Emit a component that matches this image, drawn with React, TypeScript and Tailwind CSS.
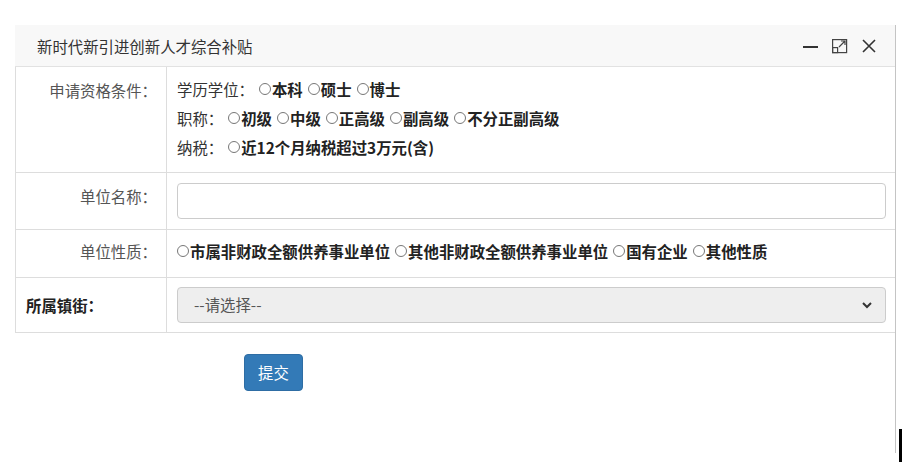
import React from 'react'

const FONT = '"Noto Sans CJK SC", "Noto Sans", "Liberation Sans", sans-serif'

function Radio({ label }: { label: string }) {
  return (
    <span className="inline-flex items-center ml-[5px]">
      <span className="w-[12px] h-[12px] rounded-full border border-[#777] mr-[1px] bg-white" />
      <span className="font-bold text-[#222]">{label}</span>
    </span>
  )
}

function Row({
  label,
  bold,
  labelClass,
  children,
}: {
  label: string
  bold?: boolean
  labelClass?: string
  children: React.ReactNode
}) {
  return (
    <div className="flex border-b border-[#ddd]">
      <div
        className={`w-[151px] shrink-0 border-r border-[#ddd] leading-[20px] ${
          bold ? 'font-bold text-[#222] text-left pl-[10px]' : 'text-right pr-[9px] text-[#555]'
        } ${labelClass ?? ''}`}
      >
        {label}
      </div>
      <div className="flex-1 pl-[10px] pr-[9px]">{children}</div>
    </div>
  )
}

export default function App() {
  return (
    <div className="relative w-[907px] h-[464px] bg-white text-[15.4px]" style={{ fontFamily: FONT }}>
      <div className="pt-[25px] pl-[15px] w-[896px]">
        <div className="h-[428px] border-r border-[#c4c4c4]">
          {/* header */}
          <div className="h-[42px] bg-[#f8f8f8] border-b border-[#e2e2e2] flex items-center pl-[22px] pr-[18px]">
            <span className="text-[#333] leading-[20px] flex-1">新时代新引进创新人才综合补贴</span>
            <div className="flex items-center gap-[13px] text-[#333]">
              <svg width="16" height="16" viewBox="0 0 16 16">
                <line x1="0" y1="9" x2="15" y2="9" stroke="#333" strokeWidth="2" />
              </svg>
              <svg width="16" height="16" viewBox="0 0 16 16" fill="none" stroke="#444" strokeWidth="1.2">
                <rect x="0.6" y="1.6" width="14" height="13" />
                <rect x="0.6" y="9.6" width="5" height="5" />
                <path d="M7 9 L13 3 M9 3 H13 V7" />
              </svg>
              <svg width="16" height="16" viewBox="0 0 16 16" fill="none" stroke="#333" strokeWidth="1.6">
                <path d="M2 2 L14 14 M14 2 L2 14" />
              </svg>
            </div>
          </div>

          {/* table */}
          <div className="border-l border-[#ddd]">
            <Row label="申请资格条件：" labelClass="pt-[13px]">
              <div className="pt-[8px] pb-[10px] text-[#333]">
                <div className="h-[29px] flex items-center">
                  <span>学历学位：</span>
                  <Radio label="本科" />
                  <Radio label="硕士" />
                  <Radio label="博士" />
                </div>
                <div className="h-[29px] flex items-center">
                  <span>职称：</span>
                  <Radio label="初级" />
                  <Radio label="中级" />
                  <Radio label="正高级" />
                  <Radio label="副高级" />
                  <Radio label="不分正副高级" />
                </div>
                <div className="h-[29px] flex items-center">
                  <span>纳税：</span>
                  <Radio label="近12个月纳税超过3万元(含)" />
                </div>
              </div>
            </Row>

            <Row label="单位名称：" labelClass="pt-[13px]">
              <div className="py-[10px]">
                <div className="h-[36px] rounded-[4px] border border-[#ccc] bg-white" />
              </div>
            </Row>

            <Row label="单位性质：" labelClass="pt-[11px]">
              <div className="h-[47px] pb-[4px] flex items-center -ml-[5px]">
                <Radio label="市属非财政全额供养事业单位" />
                <Radio label="其他非财政全额供养事业单位" />
                <Radio label="国有企业" />
                <Radio label="其他性质" />
              </div>
            </Row>

            <Row label="所属镇街：" bold labelClass="flex items-center">
              <div className="py-[9px]">
                <div className="h-[36px] rounded-[4px] border border-[#ccc] bg-[#eee] flex items-center pl-[16px] pr-[12px]">
                  <span className="flex-1 text-[#555]">--请选择--</span>
                  <svg width="12" height="12" viewBox="0 0 12 12" fill="none" stroke="#333" strokeWidth="2">
                    <path d="M2 4 L6 8 L10 4" />
                  </svg>
                </div>
              </div>
            </Row>
          </div>

          {/* footer */}
          <div className="pl-[229px] pt-[21px]">
            <button className="w-[59px] h-[37px] rounded-[4px] bg-[#337ab7] border border-[#2e6da4] text-white">
              提交
            </button>
          </div>
        </div>
      </div>
      <div className="absolute left-[899px] top-[429px] w-[3px] h-[33px] bg-black" />
    </div>
  )
}
